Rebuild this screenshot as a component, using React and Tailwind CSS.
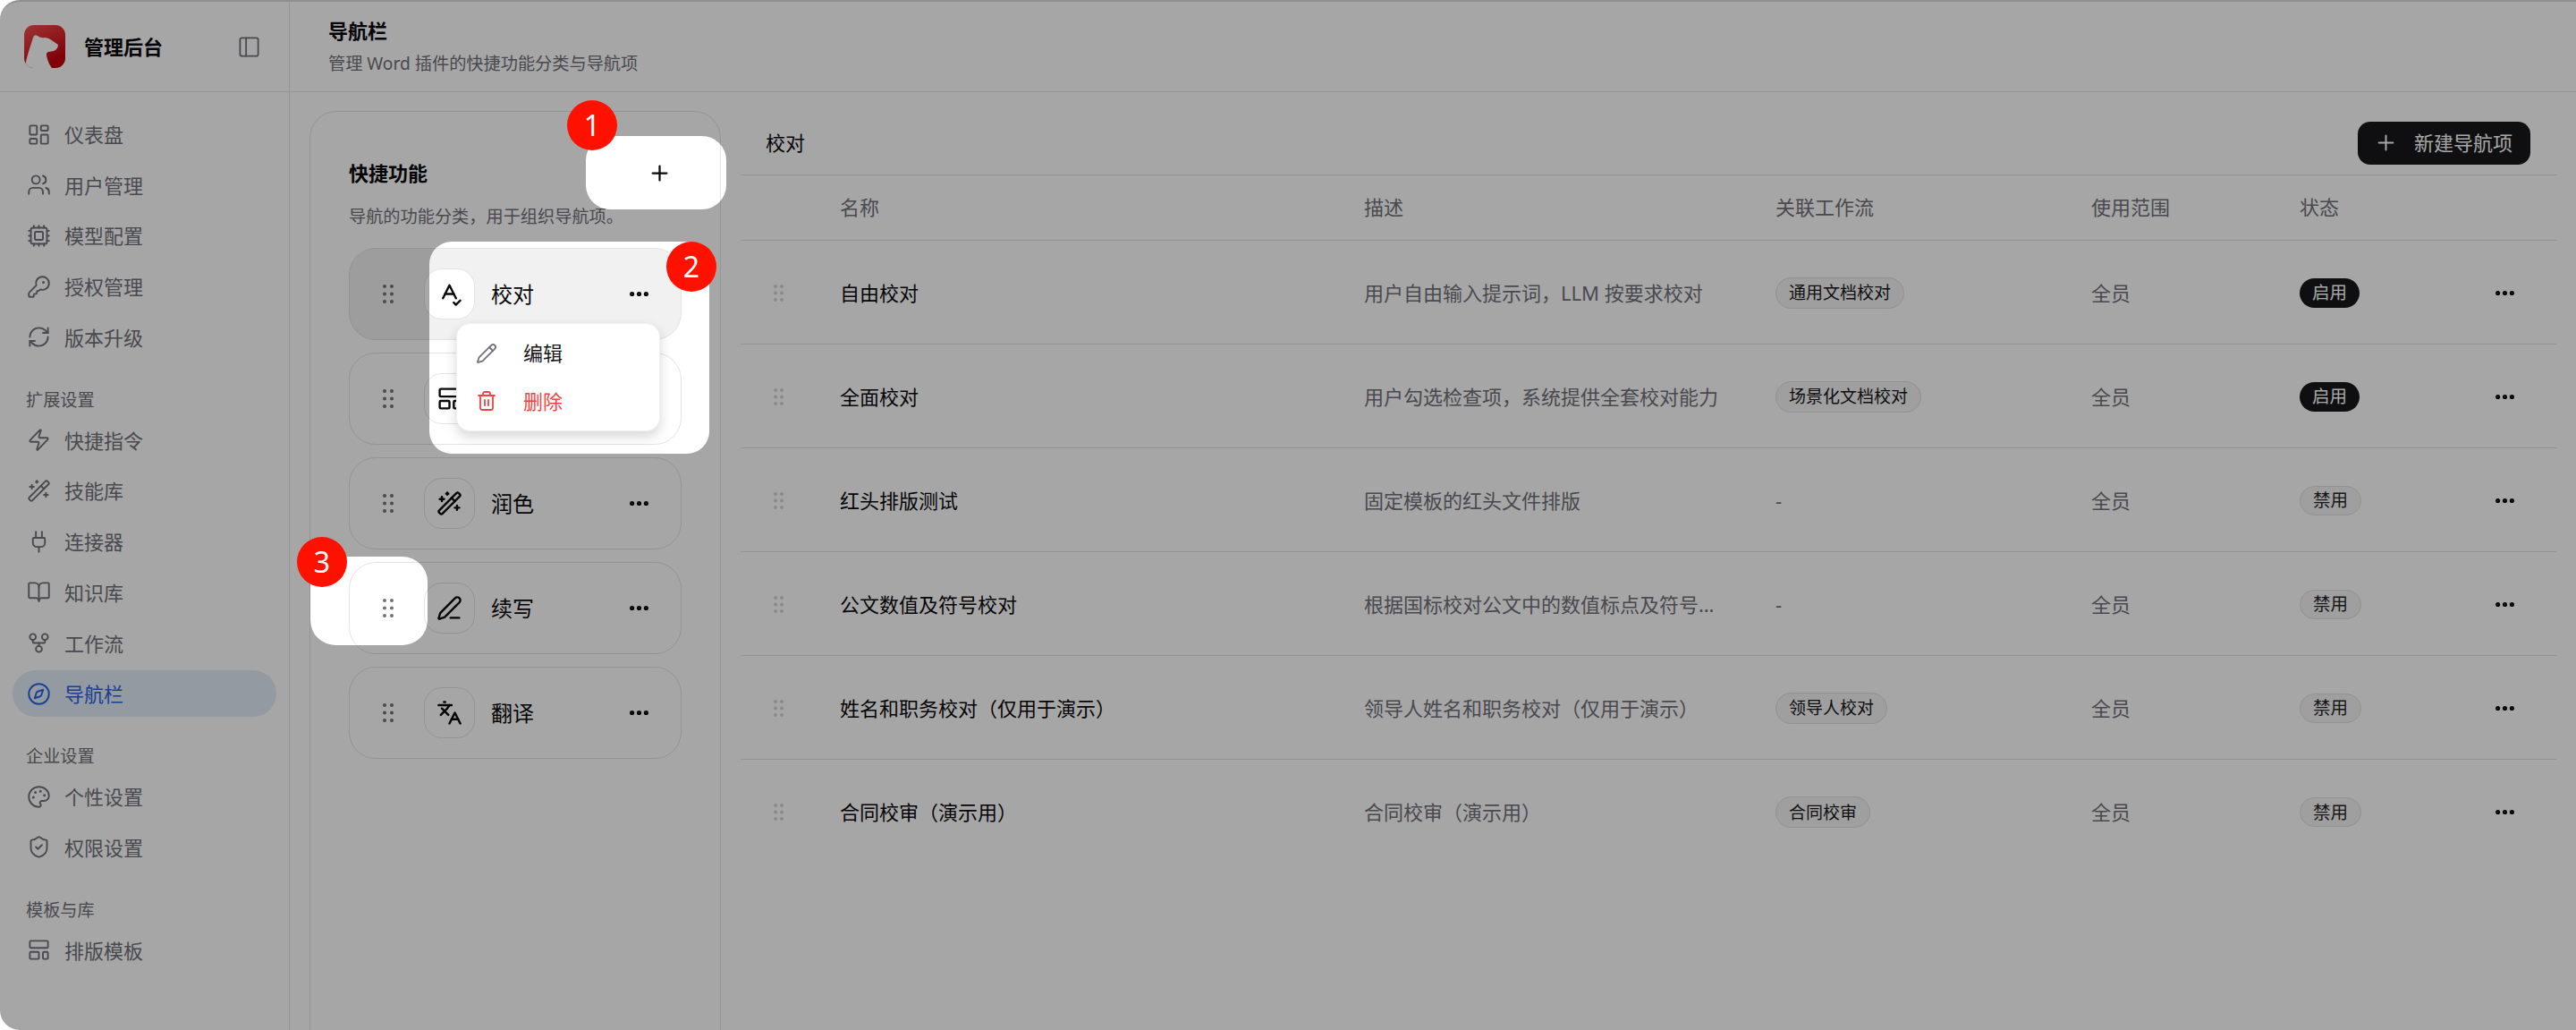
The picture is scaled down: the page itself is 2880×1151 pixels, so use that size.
import React from "react";
import {
  LayoutDashboard, Users, Cpu, KeyRound, RefreshCw, Zap, WandSparkles, Plug, BookOpen, GitFork,
  Compass, Palette, ShieldCheck, LayoutTemplate, PanelLeft, Plus, Ellipsis, SpellCheck, PenLine,
  Languages, Pencil, Trash2,
} from "lucide-react";

const sections = [
  { items: [[LayoutDashboard, "仪表盘"], [Users, "用户管理"], [Cpu, "模型配置"], [KeyRound, "授权管理"], [RefreshCw, "版本升级"]] },
  { title: "扩展设置", items: [[Zap, "快捷指令"], [WandSparkles, "技能库"], [Plug, "连接器"], [BookOpen, "知识库"], [GitFork, "工作流"], [Compass, "导航栏", true]] },
  { title: "企业设置", items: [[Palette, "个性设置"], [ShieldCheck, "权限设置"]] },
  { title: "模板与库", items: [[LayoutTemplate, "排版模板"]] },
];

const categories = [
  [SpellCheck, "校对", true],
  [LayoutTemplate, ""],
  [WandSparkles, "润色"],
  [PenLine, "续写"],
  [Languages, "翻译"],
];

const rows = [
  ["自由校对", "用户自由输入提示词，LLM 按要求校对", "通用文档校对", true],
  ["全面校对", "用户勾选检查项，系统提供全套校对能力", "场景化文档校对", true],
  ["红头排版测试", "固定模板的红头文件排版", null, false],
  ["公文数值及符号校对", "根据国标校对公文中的数值标点及符号用法规范", null, false],
  ["姓名和职务校对（仅用于演示）", "领导人姓名和职务校对（仅用于演示）", "领导人校对", false],
  ["合同校审（演示用）", "合同校审（演示用）", "合同校审", false],
];

function rr(x, y, w, h, r) {
  return `M${x + r} ${y}H${x + w - r}A${r} ${r} 0 0 1 ${x + w} ${y + r}V${y + h - r}A${r} ${r} 0 0 1 ${x + w - r} ${y + h}H${x + r}A${r} ${r} 0 0 1 ${x} ${y + h - r}V${y + r}A${r} ${r} 0 0 1 ${x + r} ${y}Z`;
}

const overlayPath =
  "M22 0H2880V1151H22A22 22 0 0 1 0 1129V22A22 22 0 0 1 22 0Z" +
  rr(655, 152, 157, 82, 27) +
  rr(480, 270, 313, 237, 25) +
  rr(347, 622, 131, 99, 28);

function Grip({ w, h, r, className }) {
  return (
    <svg width={w} height={h} viewBox={`0 0 ${w} ${h}`} className={className} fill="currentColor">
      {[r, h / 2, h - r].map((cy) =>
        [r, w - r].map((cx) => <circle key={`${cx}-${cy}`} cx={cx} cy={cy} r={r} />)
      )}
    </svg>
  );
}

function Logo() {
  return (
    <svg width="46" height="48" viewBox="0 0 46 48" className="shrink-0 rounded-[11px]">
      <defs>
        <linearGradient id="logoBg" x1="0" y1="0" x2="0.5" y2="1">
          <stop offset="0" stopColor="#f45252" />
          <stop offset="1" stopColor="#c4000c" />
        </linearGradient>
      </defs>
      <rect width="46" height="48" fill="url(#logoBg)" />
      <path
        d="M1 46C3 34 7 24 10 14C11 11 13 10.500 15 12C18 14 20 14.500 23 14C28 14 32 18 38 22C38 25 36 28 33 29L27 30C24 31 25 34 26 38C27 42 29 45 31 48H2Z"
        fill="#ffffff"
      />
    </svg>
  );
}

function Sidebar() {
  return (
    <aside className="flex h-full w-[324px] shrink-0 flex-col border-r border-[#e4e4e7]">
      <div className="flex h-[101px] shrink-0 items-center border-b border-[#e4e4e7] pl-[27px] pr-[31px]">
        <Logo />
        <span className="ml-[21px] flex-1 text-[22px] font-bold leading-[30px] text-[#09090b]">管理后台</span>
        <PanelLeft size={27} strokeWidth={1.6} className="text-[#71717a]" />
      </div>
      <nav className="flex flex-col gap-[28px] px-[14px] pt-[21px]">
        {sections.map((s, i) => (
          <div key={i} className="flex flex-col">
            {s.title && (
              <div className="mb-[4px] h-[31px] pl-[15px] text-[19.2px] leading-[32px] text-[#71717a]">{s.title}</div>
            )}
            <div className="flex flex-col gap-[4.700px]">
              {s.items.map(([Icon, label, active]) => (
                <div
                  key={label}
                  className={
                    active
                      ? "flex h-[52px] w-[295px] items-center gap-[15px] rounded-[26px] bg-[#e4edf8] pl-[16px] text-[22px] text-[#2a62e6]"
                      : "flex h-[52px] w-[295px] items-center gap-[15px] rounded-[26px] pl-[16px] text-[22px] text-[#71717a]"
                  }
                >
                  <Icon size={27} strokeWidth={1.7} />
                  <span className="leading-[30px]">{label}</span>
                </div>
              ))}
            </div>
          </div>
        ))}
      </nav>
    </aside>
  );
}

function CategoryPanel() {
  return (
    <section className="-mb-[40px] w-[460px] shrink-0 rounded-[30px] border border-[#e4e4e7] px-[43px] pt-[43px]">
      <div className="flex h-[50px] items-center justify-between">
        <span className="text-[22px] font-bold leading-[30px] text-[#09090b]">快捷功能</span>
        <span className="flex h-[50px] w-[50px] items-center justify-center text-[#09090b]">
          <Plus size={27} strokeWidth={2} />
        </span>
      </div>
      <p className="mt-[9px] h-[30px] text-[19.2px] leading-[30px] text-[#71717a]">导航的功能分类，用于组织导航项。</p>
      <div className="mt-[20px] flex flex-col gap-[14px]">
        {categories.map(([Icon, label, selected], i) => (
          <div
            key={i}
            className={
              selected
                ? "relative flex h-[103px] items-center rounded-[30px] border border-[#e4e4e7] bg-[#f1f1f1] pl-[37px] pr-[33px]"
                : "relative flex h-[103px] items-center rounded-[30px] border border-[#e4e4e7] pl-[37px] pr-[33px]"
            }
          >
            <Grip w={12} h={21} r={2} className="shrink-0 text-[#71717a]" />
            <span className="ml-[34px] flex h-[57px] w-[57px] shrink-0 items-center justify-center rounded-[20px] border border-[#e4e4e7] bg-white text-[#09090b]">
              <Icon size={29} strokeWidth={2} />
            </span>
            <span className="ml-[18px] flex-1 text-[24px] leading-[32px] text-[#09090b]">{label}</span>
            <Ellipsis size={27} strokeWidth={2.6} className="text-[#09090b]" />
            {selected && (
              <div className="absolute left-[119px] top-[83px] z-10 flex h-[121px] w-[228px] flex-col rounded-[15px] border border-[#f0f0f0] bg-white px-[21px] py-[6px] shadow-[0_6px_14px_rgba(0,0,0,0.16)]">
                <div className="flex h-[54px] items-center gap-[29px] text-[22px] text-[#18181b]">
                  <Pencil size={24} strokeWidth={1.8} className="text-[#71717a]" />
                  <span>编辑</span>
                </div>
                <div className="flex h-[54px] items-center gap-[29px] text-[22px] text-[#ef4444]">
                  <Trash2 size={24} strokeWidth={1.8} />
                  <span>删除</span>
                </div>
              </div>
            )}
          </div>
        ))}
      </div>
    </section>
  );
}

const gridCols = "grid grid-cols-[111px_586px_460px_353px_233px_1fr] items-center";

function TablePane() {
  return (
    <section className="mr-[22px] flex min-w-0 flex-1 flex-col">
      <div className="flex h-[72px] shrink-0 items-center justify-between border-b border-[#e4e4e7] pl-[28px] pr-[29px]">
        <span className="pb-[2px] text-[22px] leading-[30px] text-[#09090b]">校对</span>
        <button className="flex h-[48px] w-[193px] items-center gap-[18px] rounded-[14px] bg-[#18181b] pl-[18px] text-[22px] text-white">
          <Plus size={27} strokeWidth={1.8} />
          <span>新建导航项</span>
        </button>
      </div>
      <div className={`${gridCols} h-[73px] border-b border-[#e4e4e7] pb-[2px] text-[22px] text-[#71717a]`}>
        <span />
        <span>名称</span>
        <span>描述</span>
        <span>关联工作流</span>
        <span>使用范围</span>
        <span>状态</span>
      </div>
      {rows.map(([name, desc, flow, on], i) => (
        <div
          key={name}
          className={
            i < rows.length - 1
              ? `${gridCols} h-[116px] border-b border-[#e4e4e7] pt-[1px] text-[22px]`
              : `${gridCols} h-[116px] pt-[1px] text-[22px]`
          }
        >
          <Grip w={11} h={19} r={2} className="ml-[37px] text-[#d4d4d8]" />
          <span className="text-[#09090b]">{name}</span>
          <span className="w-[400px] truncate text-[#71717a]">{desc}</span>
          <span>
            {flow ? (
              <span className="inline-flex h-[35px] items-center rounded-full border border-[#e0e0e2] bg-[#f4f4f5] px-[14px] text-[19px] text-[#18181b]">
                {flow}
              </span>
            ) : (
              <span className="text-[#71717a]">-</span>
            )}
          </span>
          <span className="text-[#71717a]">全员</span>
          <span className="flex items-center justify-between pr-[44px]">
            <span
              className={
                on
                  ? "inline-flex h-[33px] items-center rounded-full bg-[#18181b] px-[14px] text-[19.5px] text-white"
                  : "inline-flex h-[33px] items-center rounded-full border border-[#e0e0e2] bg-[#f4f4f5] px-[14px] text-[19.5px] text-[#27272a]"
              }
            >
              {on ? "启用" : "禁用"}
            </span>
            <Ellipsis size={27} strokeWidth={2.6} className="text-[#09090b]" />
          </span>
        </div>
      ))}
    </section>
  );
}

function Badge({ n, className }) {
  return (
    <span
      className={`absolute z-30 flex h-[56px] w-[56px] items-center justify-center rounded-full bg-[#ff1100] text-[32px] leading-none text-white ${className}`}
    >
      {n}
    </span>
  );
}

export default function App() {
  return (
    <div className="relative h-[1151px] w-[2880px] overflow-hidden bg-white [font-family:'Noto_Sans','Noto_Sans_CJK_SC',sans-serif]">
      <div className="flex h-full overflow-hidden rounded-l-[22px] border-t-2 border-[#dcdcdc] bg-white">
        <Sidebar />
        <main className="flex min-w-0 flex-1 flex-col">
          <header className="flex h-[101px] shrink-0 flex-col border-b border-[#e4e4e7] pl-[43px] pt-[17px]">
            <h1 className="text-[22px] font-bold leading-[30px] text-[#09090b]">导航栏</h1>
            <p className="mt-[7px] text-[19.2px] leading-[30px] text-[#71717a]">管理 Word 插件的快捷功能分类与导航项</p>
          </header>
          <div className="flex min-h-0 flex-1 gap-[22px] pl-[22px] pt-[21px]">
            <CategoryPanel />
            <TablePane />
          </div>
        </main>
      </div>
      <svg
        className="pointer-events-none absolute left-0 top-0 z-20"
        width="2880"
        height="1151"
        viewBox="0 0 2880 1151"
      >
        <path d={overlayPath} fill="#000000" fillOpacity="0.35" fillRule="evenodd" />
      </svg>
      <Badge n={1} className="left-[634px] top-[112px]" />
      <Badge n={2} className="left-[745px] top-[270px]" />
      <Badge n={3} className="left-[332px] top-[600px]" />
    </div>
  );
}
